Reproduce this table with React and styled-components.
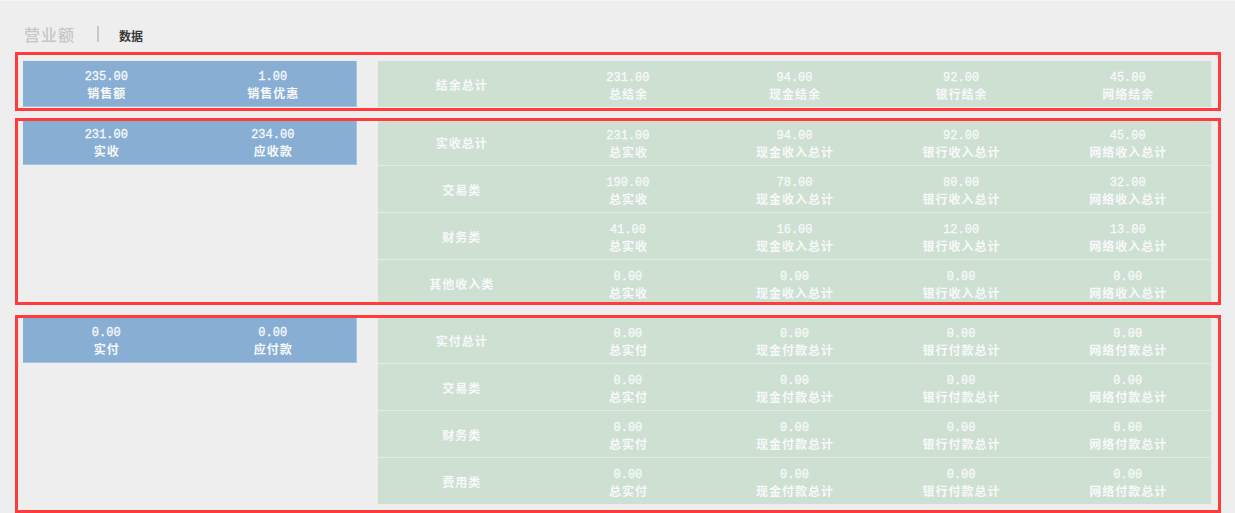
import React from 'react';
import styled, { createGlobalStyle } from 'styled-components';

const GlobalStyle = createGlobalStyle`
    html, body {
        margin: 0;
        padding: 0;
        background: #eeeeee;
    }
    body {
        font-family: "Liberation Sans", "Noto Sans CJK SC", sans-serif;
    }
`;

const Page = styled.div`
    border-top: 1px solid #f6f6f6;
    padding: 23px 14px 2px 15px;
`;

const Header = styled.div`
    display: flex;
    align-items: center;
    height: 20px;
    padding-left: 9px;
    margin-bottom: 8px;
`;

const Title = styled.span`
    font-family: "Noto Sans CJK SC", sans-serif;
    font-size: 16px;
    font-weight: 500;
    color: #c6c6c6;
    letter-spacing: 1px;
`;

const Divider = styled.span`
    width: 2px;
    height: 16px;
    background: #c8c8c8;
    margin: 0 20px 0 22px;
`;

const SubTitle = styled.span`
    font-family: "Noto Sans CJK SC", sans-serif;
    font-size: 12px;
    font-weight: 700;
    color: #3a3a3a;
    padding-top: 2px;
`;

const Frame = styled.section`
    border: 3px solid #ff3b3b;
    overflow: hidden;
    margin-bottom: ${(p) => p.$gap || 0}px;
`;

const Body = styled.div`
    display: flex;
    align-items: flex-start;
    gap: 21px;
    margin: ${(p) => p.$m};
`;

const SumBlock = styled.div`
    width: 334px;
    height: 46px;
    box-sizing: border-box;
    display: grid;
    grid-template-columns: 1fr 1fr;
    background: #89aed4;
    border-right: 1px solid #a6c2de;
    border-bottom: 1px solid #a6c2de;
    flex: none;
`;

const Table = styled.div`
    flex: 1;
    display: flex;
    flex-direction: column;
    gap: 1px;
    background: #e2ebe4;
    border-right: 1px solid #e2ebe4;
`;

const Row = styled.div`
    display: grid;
    grid-template-columns: repeat(5, 1fr);
    height: 46px;
    background: #cee0d2;
`;

const Cell = styled.div`
    display: flex;
    flex-direction: column;
    align-items: center;
    justify-content: center;
    padding-top: ${(p) => (p.$head ? 2 : 3)}px;
    color: #f7f9fb;
    font-weight: 700;
    font-size: 12px;
    line-height: 16px;
`;

const Num = styled.span`
    font-family: "Liberation Mono", "DejaVu Sans Mono", monospace;
    font-size: 12px;
    font-weight: 400;
    -webkit-text-stroke: 0.3px currentColor;
`;

const Label = styled.span`
    font-family: "Noto Sans CJK SC", sans-serif;
    font-size: 12px;
    font-weight: 700;
    letter-spacing: 1px;
    margin-right: -1px;
`;

const Stat = ({ value, label }) => (
    <Cell>
        <Num>{value}</Num>
        <Label>{label}</Label>
    </Cell>
);

const sections = [
    {
        sum: [['235.00', '销售额'], ['1.00', '销售优惠']],
        m: '6px 6px 1px 5px',
        gap: 7,
        rows: [
            ['结余总计', [['231.00', '总结余'], ['94.00', '现金结余'], ['92.00', '银行结余'], ['45.00', '网络结余']]],
        ],
    },
    {
        sum: [['231.00', '实收'], ['234.00', '应收款']],
        m: '-2px 6px -4px 5px',
        gap: 10,
        rows: [
            ['实收总计', [['231.00', '总实收'], ['94.00', '现金收入总计'], ['92.00', '银行收入总计'], ['45.00', '网络收入总计']]],
            ['交易类', [['190.00', '总实收'], ['78.00', '现金收入总计'], ['80.00', '银行收入总计'], ['32.00', '网络收入总计']]],
            ['财务类', [['41.00', '总实收'], ['16.00', '现金收入总计'], ['12.00', '银行收入总计'], ['13.00', '网络收入总计']]],
            ['其他收入类', [['0.00', '总实收'], ['0.00', '现金收入总计'], ['0.00', '银行收入总计'], ['0.00', '网络收入总计']]],
        ],
    },
    {
        sum: [['0.00', '实付'], ['0.00', '应付款']],
        m: '-1px 6px 6px 5px',
        gap: 0,
        rows: ['实付总计', '交易类', '财务类', '费用类'].map((h) => [
            h,
            [['0.00', '总实付'], ['0.00', '现金付款总计'], ['0.00', '银行付款总计'], ['0.00', '网络付款总计']],
        ]),
    },
];

export default function App() {
    return (
        <Page>
            <GlobalStyle />
            <Header>
                <Title>营业额</Title>
                <Divider />
                <SubTitle>数据</SubTitle>
            </Header>
            {sections.map((s, i) => (
                <Frame key={i} $gap={s.gap}>
                    <Body $m={s.m}>
                        <SumBlock>
                            {s.sum.map(([v, l]) => (
                                <Stat key={l} value={v} label={l} />
                            ))}
                        </SumBlock>
                        <Table>
                            {s.rows.map(([head, stats]) => (
                                <Row key={head}>
                                    <Cell $head>
                                        <Label>{head}</Label>
                                    </Cell>
                                    {stats.map(([v, l]) => (
                                        <Stat key={l} value={v} label={l} />
                                    ))}
                                </Row>
                            ))}
                        </Table>
                    </Body>
                </Frame>
            ))}
        </Page>
    );
}
